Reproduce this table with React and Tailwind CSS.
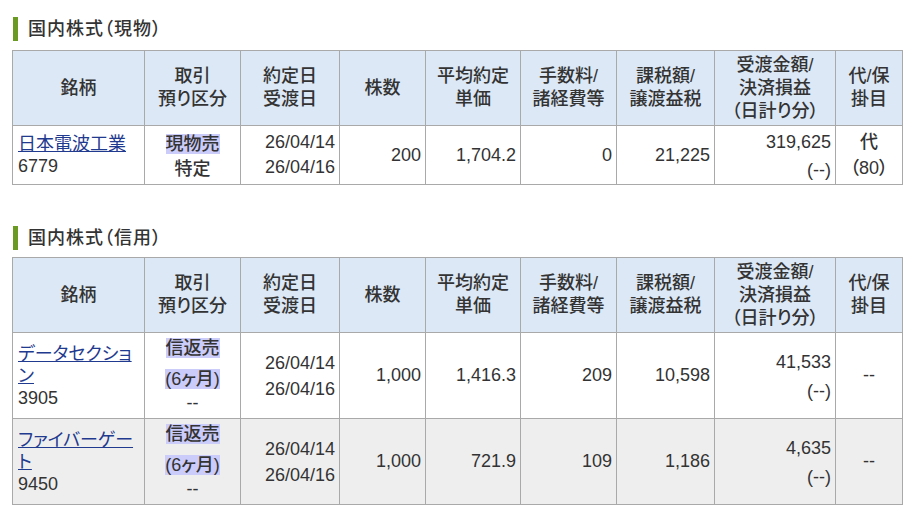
const cell = 'border border-[#a9a9a9] align-middle p-0';
const num = `${cell} text-right pr-[4px]`;

function Title({ children, className }) {
  return (
    <div className={`flex items-center h-[24px] ml-[13px] ${className}`}>
      <span className="w-[5px] h-[24px] bg-[#6b9a22] mr-[10px]" />
      <h2 className="text-[18px] leading-[24px] tracking-[1px] text-[#333] font-medium">{children}</h2>
    </div>
  );
}

function Mark({ children, className = '' }) {
  return <span className={`inline-block h-[20px] leading-[20px] bg-[#ccccfa] ${className}`}>{children}</span>;
}

function Head() {
  return (
    <>
      <colgroup>
        <col className="w-[132px]" />
        <col className="w-[96px]" />
        <col className="w-[99px]" />
        <col className="w-[86px]" />
        <col className="w-[95px]" />
        <col className="w-[96px]" />
        <col className="w-[98px]" />
        <col className="w-[121px]" />
        <col className="w-[67px]" />
      </colgroup>
      <thead>
        <tr className="bg-[#dce8f5] text-[#333] leading-[23px]">
          <th className={`${cell} h-[75px] font-medium`}>銘柄</th>
          <th className={`${cell} font-medium`}>取引<br />預り区分</th>
          <th className={`${cell} font-medium`}>約定日<br />受渡日</th>
          <th className={`${cell} font-medium`}>株数</th>
          <th className={`${cell} font-medium`}>平均約定<br />単価</th>
          <th className={`${cell} font-medium`}>手数料/<br />諸経費等</th>
          <th className={`${cell} font-medium`}>課税額/<br />譲渡益税</th>
          <th className={`${cell} font-medium`}>受渡金額/<br />決済損益<br />（日計り分）</th>
          <th className={`${cell} font-medium`}>代/保<br />掛目</th>
        </tr>
      </thead>
    </>
  );
}

function Name({ name, code }) {
  return (
    <td className={`${cell} text-left pl-[5px] pr-[4px] leading-[22px]`}>
      <a href="#" className="text-[#1f3a8f] underline">{name}</a>
      <br />
      {code}
    </td>
  );
}

const margin = [
  { name: 'データセクション', code: '3905', qty: '1,000', price: '1,416.3', fee: '209', tax: '10,598', amt: '41,533', bg: 'bg-white' },
  { name: 'ファイバーゲート', code: '9450', qty: '1,000', price: '721.9', fee: '109', tax: '1,186', amt: '4,635', bg: 'bg-[#eeeeee]' },
];

export default function App() {
  return (
    <div className="w-[912px] h-[520px] bg-white text-[#333] text-[18px] pt-[17px] font-['Liberation_Sans','Noto_Sans_CJK_JP',sans-serif] [font-feature-settings:'palt']">
      <Title className="mb-[9px]">国内株式（現物）</Title>
      <table className="ml-[12px] w-[890px] table-fixed">
        <Head />
        <tbody>
          <tr>
            <Name name="日本電波工業" code="6779" />
            <td className={`${cell} h-[59px] text-center pt-[3px]`}>
              <div className="flex flex-col items-center font-medium">
                <Mark>現物売</Mark>
                <span className="mt-[4px] leading-[22px]">特定</span>
              </div>
            </td>
            <td className={`${num} leading-[25px]`}>26/04/14<br />26/04/16</td>
            <td className={num}>200</td>
            <td className={num}>1,704.2</td>
            <td className={num}>0</td>
            <td className={num}>21,225</td>
            <td className={`${num} leading-[28px] pt-[2px]`}>319,625<br />(--)</td>
            <td className={`${cell} text-center leading-[26px] font-medium`}>代<br />（80）</td>
          </tr>
        </tbody>
      </table>

      <Title className="mt-[41px] mb-[7px]">国内株式（信用）</Title>
      <table className="ml-[12px] w-[890px] table-fixed">
        <Head />
        <tbody>
          {margin.map((r) => (
            <tr key={r.code} className={r.bg}>
              <Name name={r.name} code={r.code} />
              <td className={`${cell} h-[86px] text-center`}>
                <div className="flex flex-col items-center font-medium">
                  <Mark>信返売</Mark>
                  <Mark className="mt-[11px]">(6ヶ月)</Mark>
                  <span className="mt-[3px] leading-[22px]">--</span>
                </div>
              </td>
              <td className={`${num} leading-[26px]`}>26/04/14<br />26/04/16</td>
              <td className={num}>{r.qty}</td>
              <td className={num}>{r.price}</td>
              <td className={num}>{r.fee}</td>
              <td className={num}>{r.tax}</td>
              <td className={`${num} leading-[29px] pt-[2px]`}>{r.amt}<br />(--)</td>
              <td className={`${cell} text-center`}>--</td>
            </tr>
          ))}
        </tbody>
      </table>
    </div>
  );
}
